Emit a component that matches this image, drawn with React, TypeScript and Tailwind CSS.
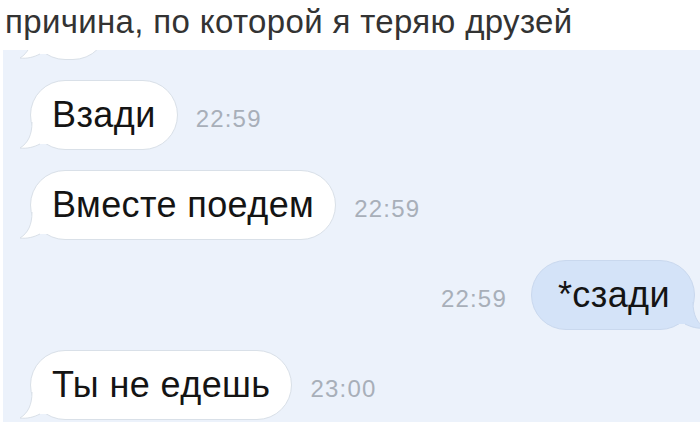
import React from 'react';

type Msg = {
  text: string;
  time: string;
  out?: boolean;
};

const messages: Msg[] = [
  { text: 'Взади', time: '22:59' },
  { text: 'Вместе поедем', time: '22:59' },
  { text: '*сзади', time: '22:59', out: true },
  { text: 'Ты не едешь', time: '23:00' },
];

// little curled tail under the bubble corner
const Tail: React.FC<{ out?: boolean }> = ({ out }) => {
  const fill = out ? '#d4e3f8' : '#ffffff';
  const stroke = out ? '#c9d8ee' : '#d9e0e8';
  return (
    <svg
      width="30"
      height="28"
      viewBox="0 0 30 28"
      className={out ? 'absolute -right-[12px] -bottom-[1px] -scale-x-100' : 'absolute -left-[12px] -bottom-[1px]'}
    >
      <path d="M13 0 C13 13 9 21 1 26 C8 27 15 25 21 22 L30 22 L30 0 Z" fill={fill} />
      <path d="M13 0 C13 13 9 21 1 26 C8 27 15 25 21 22" fill="none" stroke={stroke} strokeWidth="1" />
    </svg>
  );
};

const Bubble: React.FC<{ text: string; out?: boolean; className?: string }> = ({ text, out, className }) => (
  <div
    className={
      'relative inline-flex h-[70px] items-center rounded-[35px] border px-[21px] text-[36px] tracking-[0.4px] text-[#141414] ' +
      (out ? 'bg-[#d4e3f8] border-[#c9d8ee] pl-[26px] pr-[24px]' : 'bg-white border-[#d9e0e8]') +
      (className ? ' ' + className : '')
    }
  >
    <Tail out={out} />
    <span className="relative">{text}</span>
  </div>
);

const Time: React.FC<{ value: string }> = ({ value }) => (
  <span className="text-[24px] tracking-[1.2px] text-[#a8afb9]">{value}</span>
);

export default function App() {
  return (
    <div className="flex h-[427px] w-[700px] flex-col bg-white" style={{ fontFamily: '"Liberation Sans", Arial, sans-serif' }}>
      <div className="h-[50px] shrink-0 pl-[5px] pt-[4px] text-[33px] leading-[36px] tracking-[0.35px] text-[#333333]">
        причина, по которой я теряю друзей
      </div>

      <div className="ml-[3px] h-[372px] overflow-hidden bg-[#ecf2fb] pl-[27px] pr-[5px]">
        <div className="flex flex-col gap-[20px]">
          <div className="-mt-[60px] flex">
            <Bubble text="" className="w-[78px]" />
          </div>
          {messages.map((m, i) =>
            m.out ? (
              <div key={i} className="flex items-baseline justify-end gap-[24px]">
                <Time value={m.time} />
                <Bubble text={m.text} out />
              </div>
            ) : (
              <div key={i} className="flex items-baseline gap-[18px]">
                <Bubble text={m.text} />
                <Time value={m.time} />
              </div>
            )
          )}
        </div>
      </div>
    </div>
  );
}
